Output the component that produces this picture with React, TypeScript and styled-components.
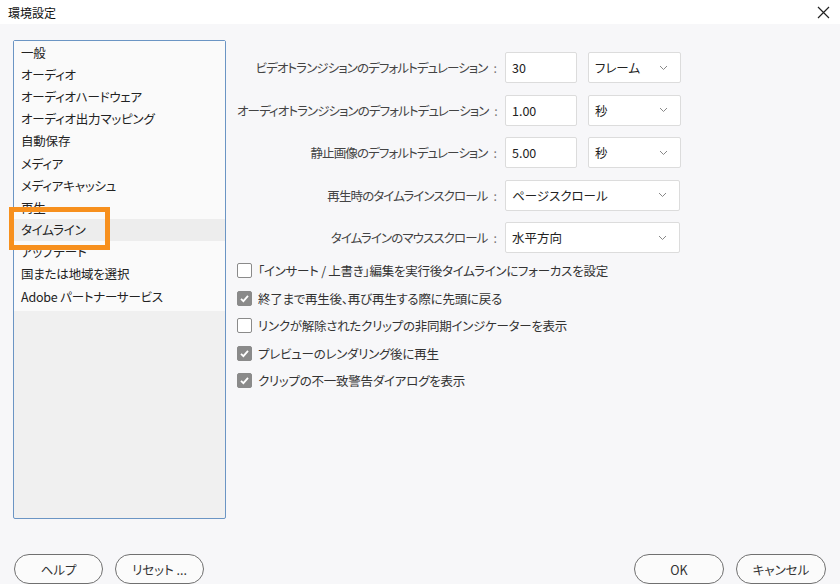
import React from "react";
import styled, { createGlobalStyle } from "styled-components";

const GlobalStyle = createGlobalStyle`
    html, body {
        margin: 0;
        padding: 0;
        background: #f7f7f9;
    }
    body {
        font-family: "Noto Sans CJK JP", "Noto Sans", sans-serif;
        font-feature-settings: "palt";
    }
`;

const Window = styled.div`
    width: 840px;
    height: 584px;
    display: flex;
    flex-direction: column;
    background: #f7f7f9;
    overflow: hidden;
`;

const TitleBar = styled.div`
    height: 24px;
    flex: none;
    display: flex;
    align-items: center;
    justify-content: space-between;
    padding: 0 8px;
    background: #ffffff;
    font-size: 12px;
    color: #111;
`;

const CloseButton = styled.div`
    width: 14px;
    height: 14px;
    margin-right: 2px;
    display: flex;
    align-items: center;
    justify-content: center;
`;

const Body = styled.div`
    flex: 1;
    display: flex;
    gap: 11px;
    padding: 16px 0 0 13px;
`;

const CategoryList = styled.div`
    position: relative;
    width: 211px;
    height: 477px;
    border: 1px solid #6b95c4;
    border-radius: 2px;
    background: #f0f0f0;
    flex: none;
`;

const Items = styled.div`
    background: #fafafa;
    padding-bottom: 4px;
`;

const Item = styled.div<{ $selected?: boolean }>`
    height: 22.2px;
    display: flex;
    align-items: center;
    padding-left: 7px;
    font-size: 12.5px;
    letter-spacing: -0.2px;
    color: #222;
    background: ${p => (p.$selected ? "#ededed" : "transparent")};
    white-space: nowrap;
`;

const Highlight = styled.div`
    position: absolute;
    left: -5px;
    top: 166px;
    width: 91px;
    height: 33px;
    border: 5px solid #f7901e;
    pointer-events: none;
`;

const Settings = styled.div`
    flex: 1;
    display: flex;
    flex-direction: column;
    padding-top: 12px;
`;

const Form = styled.div`
    display: flex;
    flex-direction: column;
    gap: 11.5px;
`;

const FormRow = styled.div`
    display: flex;
    align-items: center;
    height: 31px;
`;

const Label = styled.div`
    width: 268px;
    flex: none;
    box-sizing: border-box;
    text-align: right;
    font-size: 12.5px;
    letter-spacing: -0.9px;
    color: #444;
    white-space: nowrap;
    padding-right: 8px;
`;

const Colon = styled.span`
    margin-left: 6px;
    color: #777;
    letter-spacing: 0;
`;

const Field = styled.div<{ $width: number }>`
    width: ${p => p.$width}px;
    height: 31px;
    box-sizing: border-box;
    border: 1px solid #dcdcdc;
    border-radius: 2px;
    background: #ffffff;
    display: flex;
    align-items: center;
    justify-content: space-between;
    padding: 0 12px 0 6px;
    font-size: 12.5px;
    color: #222;
    margin-right: 11px;
`;

const Checks = styled.div`
    display: flex;
    flex-direction: column;
    margin-top: 4px;
`;

const CheckRow = styled.div`
    height: 27.5px;
    display: flex;
    align-items: center;
    gap: 6px;
    font-size: 12.5px;
    letter-spacing: -0.25px;
    color: #333;
    white-space: nowrap;
`;

const Box = styled.div<{ $checked?: boolean }>`
    width: 15px;
    height: 15px;
    box-sizing: border-box;
    border-radius: 2px;
    border: 1.5px solid #8a8a8a;
    background: ${p => (p.$checked ? "#8a8a8a" : "#ffffff")};
    display: flex;
    align-items: center;
    justify-content: center;
`;

const Footer = styled.div`
    height: 65px;
    flex: none;
    display: flex;
    justify-content: space-between;
    padding: 0 14px 13px 14px;
    align-items: flex-end;
`;

const ButtonGroup = styled.div`
    display: flex;
    gap: 12px;
`;

const Button = styled.div<{ $width?: number }>`
    width: ${p => p.$width ?? 90}px;
    height: 30px;
    box-sizing: border-box;
    border: 1px solid #707070;
    border-radius: 15px;
    background: #fbfbfb;
    display: flex;
    align-items: center;
    justify-content: center;
    font-size: 12.5px;
    color: #333;
`;

const Chevron = () => (
    <svg width="9" height="6" viewBox="0 0 9 6">
        <path d="M1 1 L4.5 4.5 L8 1" fill="none" stroke="#888" strokeWidth="1" />
    </svg>
);

const CheckMark = () => (
    <svg width="11" height="11" viewBox="0 0 11 11">
        <path d="M2 5.8 L4.4 8.2 L9 2.8" fill="none" stroke="#fff" strokeWidth="1.8" />
    </svg>
);

const categories = [
    "一般",
    "オーディオ",
    "オーディオハードウェア",
    "オーディオ出力マッピング",
    "自動保存",
    "メディア",
    "メディアキャッシュ",
    "再生",
    "タイムライン",
    "アップデート",
    "国または地域を選択",
    "Adobe パートナーサービス",
];

const checks: [string, boolean][] = [
    ["「インサート / 上書き」編集を実行後タイムラインにフォーカスを設定", false],
    ["終了まで再生後、再び再生する際に先頭に戻る", true],
    ["リンクが解除されたクリップの非同期インジケーターを表示", false],
    ["プレビューのレンダリング後に再生", true],
    ["クリップの不一致警告ダイアログを表示", true],
];

export default function App() {
    return (
        <Window>
            <GlobalStyle />
            <TitleBar>
                <span>環境設定</span>
                <CloseButton>
                    <svg width="13" height="13" viewBox="0 0 13 13">
                        <path d="M1 1 L12 12 M12 1 L1 12" stroke="#222" strokeWidth="1.2" />
                    </svg>
                </CloseButton>
            </TitleBar>
            <Body>
                <CategoryList>
                    <Items>
                        {categories.map(c => (
                            <Item key={c} $selected={c === "タイムライン"}>{c}</Item>
                        ))}
                    </Items>
                    <Highlight />
                </CategoryList>
                <Settings>
                    <Form>
                        <FormRow>
                            <Label>ビデオトランジションのデフォルトデュレーション<Colon>:</Colon></Label>
                            <Field $width={72}>30</Field>
                            <Field $width={93}>フレーム<Chevron /></Field>
                        </FormRow>
                        <FormRow>
                            <Label>オーディオトランジションのデフォルトデュレーション<Colon>:</Colon></Label>
                            <Field $width={72}>1.00</Field>
                            <Field $width={93}>秒<Chevron /></Field>
                        </FormRow>
                        <FormRow>
                            <Label>静止画像のデフォルトデュレーション<Colon>:</Colon></Label>
                            <Field $width={72}>5.00</Field>
                            <Field $width={93}>秒<Chevron /></Field>
                        </FormRow>
                        <FormRow>
                            <Label>再生時のタイムラインスクロール<Colon>:</Colon></Label>
                            <Field $width={175}>ページスクロール<Chevron /></Field>
                        </FormRow>
                        <FormRow>
                            <Label>タイムラインのマウススクロール<Colon>:</Colon></Label>
                            <Field $width={175}>水平方向<Chevron /></Field>
                        </FormRow>
                    </Form>
                    <Checks>
                        {checks.map(([text, on]) => (
                            <CheckRow key={text}>
                                <Box $checked={on}>{on && <CheckMark />}</Box>
                                {text}
                            </CheckRow>
                        ))}
                    </Checks>
                </Settings>
            </Body>
            <Footer>
                <ButtonGroup>
                    <Button $width={89}>ヘルプ</Button>
                    <Button $width={89}>リセット ...</Button>
                </ButtonGroup>
                <ButtonGroup>
                    <Button>OK</Button>
                    <Button>キャンセル</Button>
                </ButtonGroup>
            </Footer>
        </Window>
    );
}
